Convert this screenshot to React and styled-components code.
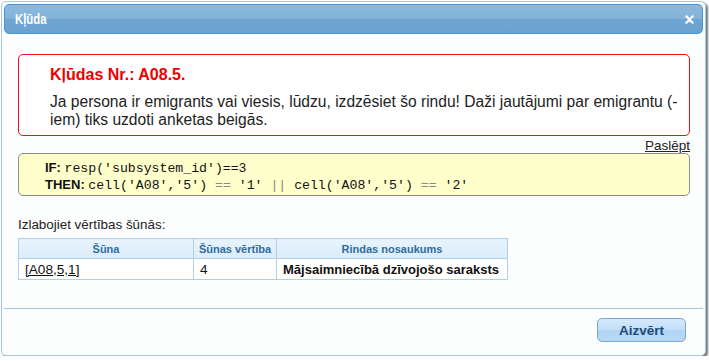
import styled, { createGlobalStyle } from "styled-components";

const GlobalStyle = createGlobalStyle`
  html, body {
    margin: 0;
    padding: 0;
    background: #ffffff;
    font-family: "Liberation Sans", Arial, sans-serif;
  }
`;

const Dialog = styled.div`
  box-sizing: border-box;
  margin: 1px 0 0 1px;
  width: 705px;
  height: 355px;
  padding: 2px;
  border: 1px solid #a6c9e2;
  border-radius: 5px;
  background: #fcfdfd;
  box-shadow: 2px 2px 2px #7a7a7a;
  display: flex;
  flex-direction: column;
`;

const TitleBar = styled.div`
  box-sizing: border-box;
  height: 30px;
  flex: none;
  display: flex;
  align-items: center;
  justify-content: space-between;
  padding: 0 8px 0 10px;
  border: 1px solid #4a92d4;
  border-radius: 5px;
  background: linear-gradient(to bottom, #8bbade 0%, #82b3da 48%, #6fa5d2 52%, #6aa2d0 100%);
`;

const Title = styled.span`
  display: inline-block;
  width: 32px;
  color: #ffffff;
  font-family: "Liberation Sans", Arial, sans-serif;
  font-weight: bold;
  font-size: 14.5px;
  white-space: nowrap;
  transform: scaleX(0.78);
  transform-origin: left center;
`;

const CloseIcon = styled.svg`
  width: 9px;
  height: 9px;
`;

const Content = styled.div`
  flex: 1;
  padding: 20px 13px 0 14px;
  display: flex;
  flex-direction: column;
`;

const ErrorBox = styled.div`
  box-sizing: border-box;
  height: 82px;
  border: 1px solid #ee1111;
  border-radius: 5px;
  padding: 10px 1px 0 31px;
  background: #ffffff;
`;

const ErrorTitle = styled.div`
  color: #ee0000;
  font-weight: bold;
  font-size: 16px;
  line-height: 20px;
  margin-bottom: 8px;
`;

const ErrorText = styled.div`
  color: #222222;
  font-size: 15.6px;
  line-height: 18px;
`;

const HideRow = styled.div`
  display: flex;
  justify-content: flex-end;
  height: 17px;
  align-items: flex-end;
`;

const HideLink = styled.a`
  color: #222222;
  font-size: 13.5px;
  line-height: 15px;
  text-decoration: underline;
`;

const RuleBox = styled.div`
  box-sizing: border-box;
  height: 43px;
  border: 1px solid #8c8c8c;
  border-radius: 5px;
  background: #ffffcc;
  padding: 6px 0 0 26px;
`;

const RuleLine = styled.div`
  font-size: 13px;
  line-height: 16px;
  color: #111111;
  white-space: pre;
`;

const Keyword = styled.b`
  font-family: "Liberation Sans", Arial, sans-serif;
`;

const Code = styled.span`
  font-family: "Liberation Mono", "Courier New", monospace;
  font-size: 13.2px;
  color: ${(p) => (p.$op ? "#888888" : "#111111")};
`;

const Label = styled.div`
  margin-top: 21px;
  font-size: 13.4px;
  line-height: 15px;
  color: #222222;
`;

const Table = styled.table`
  margin-top: 6px;
  border-collapse: collapse;
  table-layout: fixed;
  width: 489px;
`;

const HeadCell = styled.th`
  box-sizing: border-box;
  height: 20px;
  width: ${(p) => p.$w}px;
  padding: 0 2px;
  border: 1px solid #aed0ea;
  background: linear-gradient(to bottom, #e8f3fc 0%, #dcecf9 100%);
  color: #2e6e9e;
  font-size: 11px;
  font-weight: bold;
  text-align: center;
  white-space: nowrap;
`;

const Cell = styled.td`
  box-sizing: border-box;
  height: 21px;
  padding: 0 4px 0 6px;
  border: 1px solid #aed0ea;
  background: #ffffff;
  color: #111111;
  font-size: ${(p) => (p.$bold ? "13px" : "13.6px")};
  font-weight: ${(p) => (p.$bold ? "bold" : "normal")};
  white-space: nowrap;
`;

const CellLink = styled.a`
  color: #111111;
  text-decoration: underline;
`;

const Footer = styled.div`
  box-sizing: border-box;
  height: 45px;
  flex: none;
  border-top: 1px solid #a6c9e2;
  display: flex;
  justify-content: flex-end;
  align-items: flex-start;
  padding: 9px 17px 0 0;
`;

const Button = styled.button`
  box-sizing: border-box;
  width: 89px;
  height: 24px;
  border: 1px solid #79a6d2;
  border-radius: 5px;
  background: linear-gradient(to bottom, #d4e8fb 0%, #c3dff8 50%, #b0d5f4 52%, #b7d9f5 100%);
  color: #1d4c78;
  font-family: "Liberation Sans", Arial, sans-serif;
  font-size: 13.5px;
  font-weight: bold;
  cursor: pointer;
`;

export default function App() {
  return (
    <>
      <GlobalStyle />
      <Dialog>
        <TitleBar>
          <Title>Kļūda</Title>
          <CloseIcon viewBox="0 0 10 10">
            <path d="M1.5 1.5 L8.5 8.5 M8.5 1.5 L1.5 8.5" stroke="#ffffff" strokeWidth="2.4" strokeLinecap="round" />
          </CloseIcon>
        </TitleBar>
        <Content>
          <ErrorBox>
            <ErrorTitle>Kļūdas Nr.: A08.5.</ErrorTitle>
            <ErrorText>
              Ja persona ir emigrants vai viesis, lūdzu, izdzēsiet šo rindu! Daži jautājumi par emigrantu (-iem) tiks uzdoti anketas beigās.
            </ErrorText>
          </ErrorBox>
          <HideRow>
            <HideLink href="#">Paslēpt</HideLink>
          </HideRow>
          <RuleBox>
            <RuleLine>
              <Keyword>IF:</Keyword> <Code>resp('subsystem_id')==3</Code>
            </RuleLine>
            <RuleLine>
              <Keyword>THEN:</Keyword> <Code>cell('A08','5')</Code>
              <Code $op> == </Code>
              <Code>'1'</Code>
              <Code $op> || </Code>
              <Code>cell('A08','5')</Code>
              <Code $op> == </Code>
              <Code>'2'</Code>
            </RuleLine>
          </RuleBox>
          <Label>Izlabojiet vērtības šūnās:</Label>
          <Table>
            <thead>
              <tr>
                <HeadCell $w={175}>Šūna</HeadCell>
                <HeadCell $w={83}>Šūnas vērtība</HeadCell>
                <HeadCell $w={231}>Rindas nosaukums</HeadCell>
              </tr>
            </thead>
            <tbody>
              <tr>
                <Cell>
                  <CellLink href="#">[A08,5,1]</CellLink>
                </Cell>
                <Cell>4</Cell>
                <Cell $bold>Mājsaimniecībā dzīvojošo saraksts</Cell>
              </tr>
            </tbody>
          </Table>
        </Content>
        <Footer>
          <Button>Aizvērt</Button>
        </Footer>
      </Dialog>
    </>
  );
}
